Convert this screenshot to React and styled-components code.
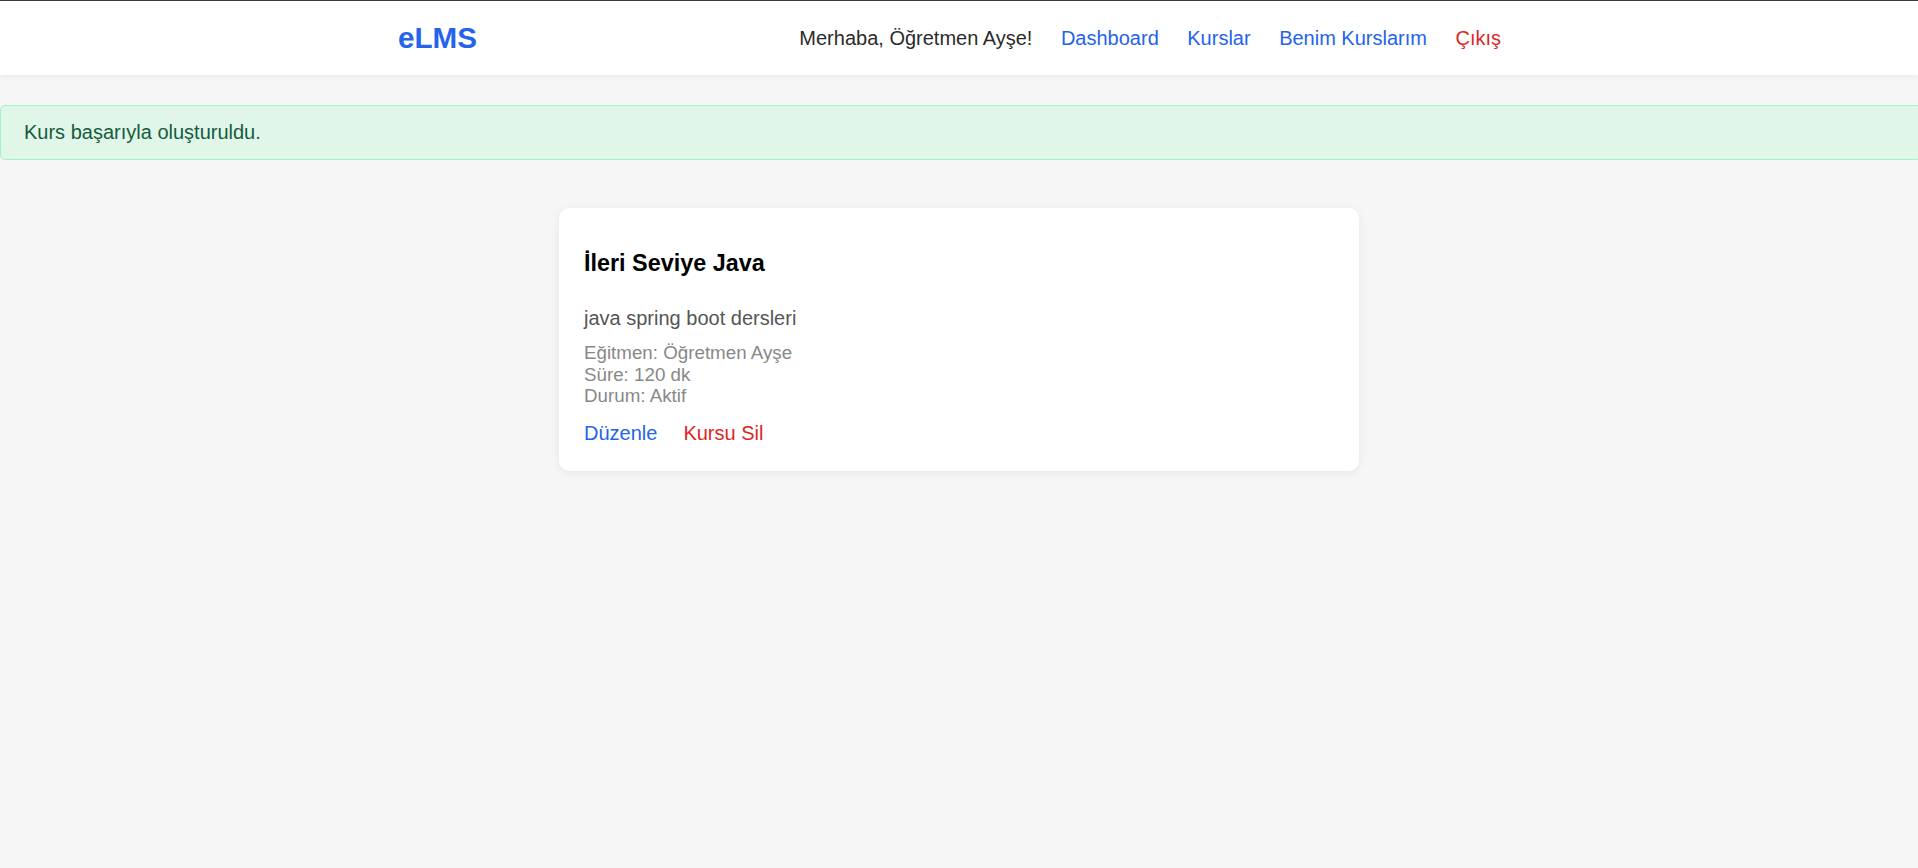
import React from "react";
import styled, { createGlobalStyle } from "styled-components";

const GlobalStyle = createGlobalStyle`
  html, body {
    margin: 0;
    padding: 0;
    background: #f6f6f6;
    font-family: "Liberation Sans", Arial, sans-serif;
    overflow-x: hidden;
  }
  * { box-sizing: border-box; }
`;

const Header = styled.header`
  background: #ffffff;
  border-top: 1px solid #3a3a3a;
  box-shadow: 0 2px 5px rgba(0, 0, 0, 0.05);
`;

const HeaderInner = styled.div`
  max-width: 1200px;
  margin: 0 auto;
  height: 74px;
  padding: 0 58px 0 39px;
  display: flex;
  align-items: center;
  justify-content: space-between;
`;

const Logo = styled.a`
  font-size: 29.6px;
  font-weight: 700;
  color: #2563eb;
  text-decoration: none;
`;

const Nav = styled.nav`
  display: flex;
  align-items: center;
  gap: 28.5px;
  font-size: 20px;
`;

const Greeting = styled.span`
  color: #2b2b2b;
`;

const NavLink = styled.a`
  color: ${(p) => (p.$danger ? "#dc2626" : "#2563eb")};
  text-decoration: none;
`;

const Alert = styled.div`
  margin: 30px -4px 0 0;
  padding: 15px 20px 15px 23px;
  background: #e0f6e9;
  border: 1px solid #a7f0cc;
  border-radius: 5px;
  color: #155c3c;
  font-size: 20px;
  line-height: 23px;
`;

const Main = styled.main`
  display: flex;
  justify-content: center;
  padding: 48px 20px 40px;
`;

const Card = styled.article`
  width: 800px;
  background: #ffffff;
  border-radius: 10px;
  box-shadow: 0 2px 10px rgba(0, 0, 0, 0.07);
  padding: 25px 25px 26px;
`;

const Title = styled.h3`
  margin: 17px 0 0;
  font-size: 23.4px;
  line-height: 27px;
  font-weight: 700;
  color: #000000;
`;

const Description = styled.p`
  margin: 30px 0 0;
  font-size: 20px;
  line-height: 23px;
  color: #555555;
`;

const Meta = styled.div`
  margin-top: 12px;
  font-size: 18.75px;
  line-height: 21.7px;
  color: #888888;
`;

const Actions = styled.div`
  margin-top: 15px;
  display: flex;
  gap: 26px;
  font-size: 20px;
  line-height: 23px;
`;

const ActionLink = styled.a`
  color: ${(p) => (p.$danger ? "#dc2626" : "#2563eb")};
  text-decoration: none;
`;

export default function App() {
  return (
    <>
      <GlobalStyle />
      <Header>
        <HeaderInner>
          <Logo href="#">eLMS</Logo>
          <Nav>
            <Greeting>Merhaba, Öğretmen Ayşe!</Greeting>
            <NavLink href="#">Dashboard</NavLink>
            <NavLink href="#">Kurslar</NavLink>
            <NavLink href="#">Benim Kurslarım</NavLink>
            <NavLink href="#" $danger>Çıkış</NavLink>
          </Nav>
        </HeaderInner>
      </Header>
      <Alert>Kurs başarıyla oluşturuldu.</Alert>
      <Main>
        <Card>
          <Title>İleri Seviye Java</Title>
          <Description>java spring boot dersleri</Description>
          <Meta>
            <div>Eğitmen: Öğretmen Ayşe</div>
            <div>Süre: 120 dk</div>
            <div>Durum: Aktif</div>
          </Meta>
          <Actions>
            <ActionLink href="#">Düzenle</ActionLink>
            <ActionLink href="#" $danger>Kursu Sil</ActionLink>
          </Actions>
        </Card>
      </Main>
    </>
  );
}
